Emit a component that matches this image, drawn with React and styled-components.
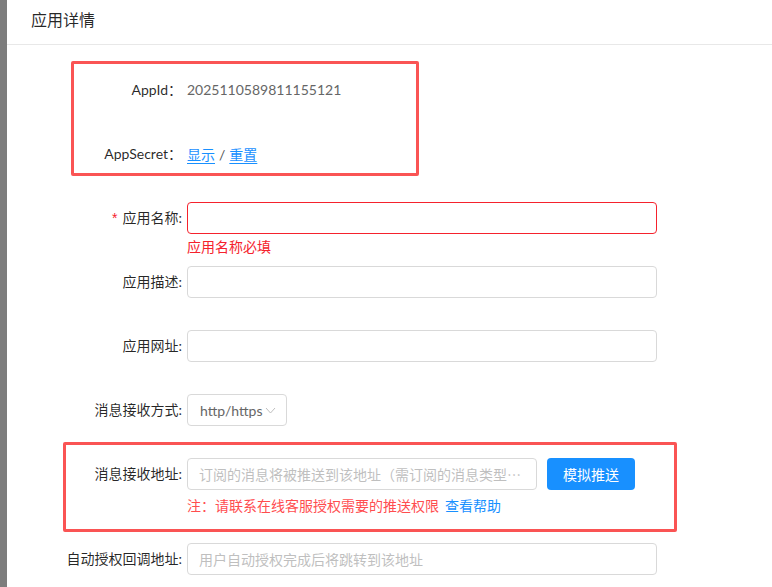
import React from "react";
import styled, { createGlobalStyle } from "styled-components";

const Global = createGlobalStyle`
  html, body { margin: 0; padding: 0; background: #fff; }
  body {
    font-family: Lato, "Noto Sans CJK SC", sans-serif;
    font-size: 14px;
    color: rgba(0,0,0,0.85);
  }
  * { box-sizing: border-box; }
`;

const Page = styled.div`
  display: flex;
  width: 772px;
  height: 587px;
  overflow: hidden;
`;

const Dim = styled.div`
  width: 7px;
  flex: none;
  background: #7d7d7d;
`;

const Panel = styled.div`
  position: relative;
  flex: 1;
  background: #fff;
  display: flex;
  flex-direction: column;
`;

const Header = styled.div`
  flex: none;
  height: 45px;
  padding-left: 24px;
  padding-bottom: 7px;
  display: flex;
  align-items: center;
  border-bottom: 1px solid #e8e8e8;
  font-family: "Noto Sans CJK SC", sans-serif;
  font-size: 16px;
  color: rgba(0,0,0,0.85);
`;

const Form = styled.div`
  flex: none;
  padding-top: 29px;
  display: flex;
  flex-direction: column;
`;

const Item = styled.div`
  flex: none;
  display: grid;
  grid-template-columns: 180px auto;
  margin-bottom: ${(p) => (p.$tight ? "0" : "32px")};
`;

const Label = styled.div`
  height: 32px;
  line-height: 32px;
  text-align: right;
  padding-right: 5px;
  white-space: nowrap;
  font-family: Lato, "Noto Sans CJK SC", sans-serif;
  color: rgba(0,0,0,0.85);
`;

const Star = styled.span`
  color: #f5222d;
  margin-right: 5px;
  font-family: "Liberation Sans", sans-serif;
`;

const Control = styled.div`
  display: flex;
  flex-direction: column;
`;

const ControlRow = styled.div`
  display: flex;
  align-items: center;
  gap: 10px;
`;

const Text = styled.div`
  height: 32px;
  line-height: 32px;
  color: #666;
  font-family: Lato, "Noto Sans CJK SC", sans-serif;
`;

const Link = styled.a`
  color: #1890ff;
  text-decoration: ${(p) => (p.$plain ? "none" : "underline")};
  text-underline-offset: 3px;
  cursor: pointer;
  font-family: "Noto Sans CJK SC", sans-serif;
`;

const Sep = styled.span`
  color: #555;
  margin: 0 4px;
`;

const Input = styled.input`
  width: ${(p) => p.$w || 470}px;
  height: 32px;
  padding: 4px 11px;
  border: 1px solid ${(p) => (p.$error ? "#f5222d" : "#d9d9d9")};
  border-radius: 4px;
  font-family: "Noto Sans CJK SC", sans-serif;
  font-size: 14px;
  color: rgba(0,0,0,0.85);
  outline: none;
  background: #fff;
  text-overflow: ellipsis;
  &::placeholder { color: #bfbfbf; }
`;

const Select = styled.div`
  width: 100px;
  height: 32px;
  border: 1px solid #d9d9d9;
  border-radius: 4px;
  display: flex;
  align-items: center;
  padding-left: 12px;
  color: #666;
  font-family: Lato, sans-serif;
  gap: 2px;
`;

const Button = styled.button`
  width: 88px;
  height: 32px;
  border: none;
  border-radius: 4px;
  background: #1890ff;
  color: #fff;
  font-family: "Noto Sans CJK SC", sans-serif;
  font-size: 14px;
  cursor: pointer;
`;

const Explain = styled.div`
  line-height: 24px;
  margin-bottom: ${(p) => p.$mb}px;
  margin-top: ${(p) => p.$mt || 0}px;
  color: #f5222d;
  font-family: "Noto Sans CJK SC", sans-serif;
  display: flex;
  gap: 6px;
`;

const Note = styled.span`
  color: #ff4d4f;
`;

const Mark = styled.div`
  position: absolute;
  border: 3px solid #fa5454;
  border-radius: 2px;
  pointer-events: none;
`;

export default function App() {
  return (
    <>
      <Global />
      <Page>
        <Dim />
        <Panel>
          <Header>应用详情</Header>
          <Form>
            <Item>
              <Label>AppId：</Label>
              <Control>
                <Text>2025110589811155121</Text>
              </Control>
            </Item>
            <Item>
              <Label>AppSecret：</Label>
              <Control>
                <Text>
                  <Link>显示</Link>
                  <Sep>/</Sep>
                  <Link>重置</Link>
                </Text>
              </Control>
            </Item>
            <Item $tight>
              <Label>
                <Star>*</Star>应用名称:
              </Label>
              <Control>
                <Input $error />
                <Explain $mb={8}>应用名称必填</Explain>
              </Control>
            </Item>
            <Item>
              <Label>应用描述:</Label>
              <Control>
                <Input />
              </Control>
            </Item>
            <Item>
              <Label>应用网址:</Label>
              <Control>
                <Input />
              </Control>
            </Item>
            <Item>
              <Label>消息接收方式:</Label>
              <Control>
                <Select>
                  http/https
                  <svg width="11" height="7" viewBox="0 0 11 7">
                    <polyline
                      points="1,1 5.5,6 10,1"
                      fill="none"
                      stroke="#bfbfbf"
                      strokeWidth="1"
                    />
                  </svg>
                </Select>
              </Control>
            </Item>
            <Item $tight>
              <Label>消息接收地址:</Label>
              <Control>
                <ControlRow>
                  <Input
                    $w={350}
                    placeholder="订阅的消息将被推送到该地址（需订阅的消息类型为应用已授权的类型）"
                  />
                  <Button>模拟推送</Button>
                </ControlRow>
                <Explain $mt={3} $mb={26}>
                  <Note>注：请联系在线客服授权需要的推送权限</Note>
                  <Link $plain>查看帮助</Link>
                </Explain>
              </Control>
            </Item>
            <Item>
              <Label>自动授权回调地址:</Label>
              <Control>
                <Input placeholder="用户自动授权完成后将跳转到该地址" />
              </Control>
            </Item>
          </Form>
          <Mark style={{ left: 64, top: 61, width: 348, height: 115 }} />
          <Mark style={{ left: 56, top: 442, width: 614, height: 90 }} />
        </Panel>
      </Page>
    </>
  );
}
